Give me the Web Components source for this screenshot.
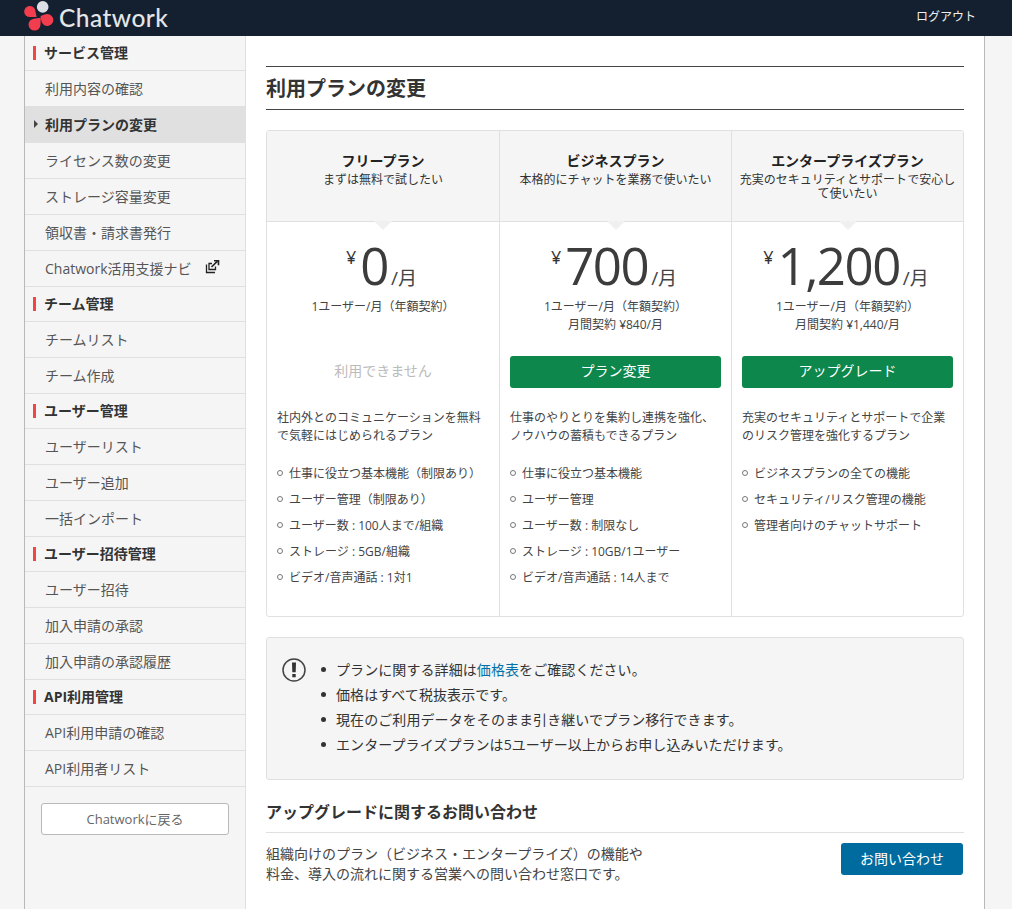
<!DOCTYPE html>
<html lang="ja"><head><meta charset="utf-8"><title>Chatwork</title>
<style>
html,body{margin:0;padding:0;height:909px;overflow:hidden;background:#f5f5f5;color:#333;font:14px/20px "Open Sans","Noto Sans CJK JP",sans-serif}
</style></head><body>
<cw-app>
  <cw-header slot="header"></cw-header>
  <cw-sidebar slot="side">
    <cw-group>サービス管理</cw-group>
    <cw-item>利用内容の確認</cw-item>
    <cw-item active>利用プランの変更</cw-item>
    <cw-item>ライセンス数の変更</cw-item>
    <cw-item>ストレージ容量変更</cw-item>
    <cw-item>領収書・請求書発行</cw-item>
    <cw-item external>Chatwork活用支援ナビ</cw-item>
    <cw-group>チーム管理</cw-group>
    <cw-item>チームリスト</cw-item>
    <cw-item>チーム作成</cw-item>
    <cw-group>ユーザー管理</cw-group>
    <cw-item>ユーザーリスト</cw-item>
    <cw-item>ユーザー追加</cw-item>
    <cw-item>一括インポート</cw-item>
    <cw-group>ユーザー招待管理</cw-group>
    <cw-item>ユーザー招待</cw-item>
    <cw-item>加入申請の承認</cw-item>
    <cw-item>加入申請の承認履歴</cw-item>
    <cw-group>API利用管理</cw-group>
    <cw-item>API利用申請の確認</cw-item>
    <cw-item>API利用者リスト</cw-item>
  </cw-sidebar>
  <cw-main slot="main">
    <cw-title>利用プランの変更</cw-title>
    <cw-plans>
      <cw-plan name="フリープラン" tagline="まずは無料で試したい" price="0" terms="1ユーザー/月（年額契約）" action="利用できません" disabled desc="社内外とのコミュニケーションを無料で気軽にはじめられるプラン" features="仕事に役立つ基本機能（制限あり）|ユーザー管理（制限あり）|ユーザー数 : 100人まで/組織|ストレージ : 5GB/組織|ビデオ/音声通話 : 1対1"></cw-plan>
      <cw-plan name="ビジネスプラン" tagline="本格的にチャットを業務で使いたい" price="700" terms="1ユーザー/月（年額契約）" monthly="月間契約 ¥840/月" action="プラン変更" desc="仕事のやりとりを集約し連携を強化、ノウハウの蓄積もできるプラン" features="仕事に役立つ基本機能|ユーザー管理|ユーザー数 : 制限なし|ストレージ : 10GB/1ユーザー|ビデオ/音声通話 : 14人まで"></cw-plan>
      <cw-plan name="エンタープライズプラン" tagline="充実のセキュリティとサポートで安心して使いたい" price="1,200" terms="1ユーザー/月（年額契約）" monthly="月間契約 ¥1,440/月" action="アップグレード" desc="充実のセキュリティとサポートで企業のリスク管理を強化するプラン" features="ビジネスプランの全ての機能|セキュリティ/リスク管理の機能|管理者向けのチャットサポート"></cw-plan>
    </cw-plans>
    <cw-notice>
      <li>プランに関する詳細は<a href="#">価格表</a>をご確認ください。</li>
      <li>価格はすべて税抜表示です。</li>
      <li>現在のご利用データをそのまま引き継いでプラン移行できます。</li>
      <li>エンタープライズプランは5ユーザー以上からお申し込みいただけます。</li>
    </cw-notice>
    <cw-contact></cw-contact>
  </cw-main>
</cw-app>
<script>
function def(name, html, setup){
  customElements.define(name, class extends HTMLElement{
    connectedCallback(){
      if(this.shadowRoot) return;
      const r=this.attachShadow({mode:'open'});
      r.innerHTML = typeof html==='function' ? html(this) : html;
      if(setup) setup(this,r);
    }
  });
}
function drop(cx,cy,rad,tx,ty){
  const dx=tx-cx,dy=ty-cy,d=Math.hypot(dx,dy),a=Math.atan2(dy,dx),b=Math.acos(rad/d);
  const p=s=>[(cx+rad*Math.cos(a+s*b)).toFixed(2),(cy+rad*Math.sin(a+s*b)).toFixed(2)].join(' ');
  return `M${tx} ${ty}L${p(1)}A${rad} ${rad} 0 1 1 ${p(-1)}Z`;
}
def('cw-app',`<style>
:host{display:block;height:909px;overflow:hidden}
.body{display:grid;grid-template-columns:221px 738px;margin-left:24px;width:961px;border-left:1px solid #b9b9b9;border-right:1px solid #b9b9b9;box-sizing:border-box;height:873px}
</style><slot name="header"></slot><div class="body"><slot name="side"></slot><slot name="main"></slot></div>`);
def('cw-header',`<style>
:host{display:flex;align-items:center;justify-content:space-between;height:36px;background:#14202f;color:#fff;box-sizing:border-box;padding:0 36px 0 24px}
.logo{display:flex;align-items:center;gap:5px}
.word{font:500 24.5px/36px Lato,sans-serif;color:#e4e6e9;letter-spacing:.45px}
.out{font-size:12px;color:#eef0f2;margin-top:-3px}
svg{margin-top:-2px}
</style>
<div class="logo"><svg width="30" height="32" viewBox="0 0 30 32">
<circle cx="18.700" cy="5.900" r="5.800" fill="#dcdfe3"/>
<path d="${drop(5.8,10.5,5.6,12.6,16)}" fill="#f23d4f"/>
<path d="${drop(23.3,19,6,16.5,15)}" fill="#f23d4f"/>
<path d="${drop(10.5,23.6,6,16.8,16.8)}" fill="#f23d4f"/>
</svg><span class="word">Chatwork</span></div>
<span class="out">ログアウト</span>`);
def('cw-sidebar',`<style>
:host{display:block;background:#f5f5f5;border-right:1px solid #e0e0e0;box-sizing:border-box;height:873px}
.back{display:block;margin:16px 16px 0 16px;height:32px;box-sizing:border-box;border:1px solid #b9b9b9;border-radius:3px;background:#fff;color:#666;font-size:13px;line-height:30px;text-align:center}
</style><slot></slot><div class="back">Chatworkに戻る</div>`);
def('cw-group',`<style>
:host{display:flex;align-items:center;height:35px;box-sizing:border-box;border-bottom:1px solid #e0e0e0;padding:0 0 0 8px;font-weight:700;font-size:14px;color:#333}
i{display:block;width:3px;height:14px;background:#f44545;margin-right:8px}
</style><i></i><slot></slot>`);
def('cw-item',`<style>
:host{display:flex;align-items:center;height:36px;box-sizing:border-box;border-bottom:1px solid #e0e0e0;padding:0 0 0 20px;font-size:14px;color:#555;position:relative}
:host([active]){background:#e0e0e0;color:#333;font-weight:700;border-bottom-color:#e0e0e0}
.arrow{position:absolute;left:9px;top:13px;width:0;height:0;border-left:4px solid #444;border-top:4px solid transparent;border-bottom:4px solid transparent}
svg{position:absolute;left:180px;top:8px}
</style><slot></slot>`,(el,r)=>{
  if(el.hasAttribute('active')) r.innerHTML+='<span class="arrow"></span>';
  if(el.hasAttribute('external')) r.innerHTML+='<svg width="15" height="15" viewBox="0 0 15 15" fill="none" stroke="#222" stroke-width="1.300"><path d="M1.500 5.500V13.500H10"/><path d="M7 4.500H4V10.500H10.500V7.500"/><path d="M6.500 8 12.500 2.200" stroke-width="1.600"/><path d="M9 1.700H13.500V6.200" stroke-width="1.600"/></svg>';
});
def('cw-main',`<style>
:host{display:block;background:#fff;padding:30px 20px 0;box-sizing:border-box;height:873px;overflow:hidden}
</style><slot></slot>`);
def('cw-title',`<style>
:host{display:block;height:44px;box-sizing:border-box;border-top:1px solid #444;border-bottom:1px solid #444;font-weight:700;font-size:20px;line-height:44px;color:#333}
</style><slot></slot>`);
def('cw-plans',`<style>
:host{display:grid;grid-template-columns:233px 232px 231px;margin-top:20px;height:487px;box-sizing:border-box;border:1px solid #e0e0e0;border-radius:3px;overflow:hidden}
</style><slot></slot>`);
def('cw-plan',el=>{
  const a=n=>el.getAttribute(n)||'';
  const lis=a('features').split('|').map(f=>`<li>${f}</li>`).join('');
  return `<style>
:host{display:block;border-right:1px solid #e0e0e0;font-size:12px;color:#333;min-width:0}
:host(:last-child){border-right:0}
.head{position:relative;height:91px;box-sizing:border-box;background:#f5f5f5;border-bottom:1px solid #e0e0e0;padding:20px 6px 0;text-align:center;line-height:14px}
.head b{display:block;font-size:14px;line-height:19px;color:#222}
.head span{display:block;color:#333;margin-top:3px}
.head::after{content:"";position:absolute;left:50%;bottom:-9px;margin-left:-9px;width:0;height:0;border-left:9px solid transparent;border-right:9px solid transparent;border-top:9px solid #f0f0f0}
.price{display:flex;justify-content:center;align-items:baseline;height:56px;margin-top:15px;padding-right:3px;color:#333;line-height:56px}
.yen{font-size:18px;align-self:flex-start;line-height:18px;margin:11px 4px 0 0}
.num{font-size:51px;letter-spacing:-1.500px;font-weight:400;color:#3c3c3c}
.per{font-size:19px;margin-left:3px;color:#444}
.terms{text-align:center;line-height:18px;height:36px;margin-top:4px;color:#444;padding-top:1px}
.act{margin:22px 10px 0 10px;height:32px;box-sizing:border-box;background:#0d874c;color:#fff;border-radius:3px;text-align:center;font-size:14px;line-height:30px}
.dis{background:none;color:#bbb}
.desc{margin:21px 10px 0;font-size:12px;line-height:18px;color:#444}
ul{list-style:none;margin:16px 10px 0;padding:0;font-size:12px}
li{position:relative;height:26px;line-height:26px;padding-left:12px;color:#444}
li::before{content:"";position:absolute;left:0;top:9px;width:4px;height:4px;border:1px solid #777;border-radius:50%}
</style>
<div class="head"><b>${a('name')}</b><span>${a('tagline')}</span></div>
<div class="price"><span class="yen">¥</span><span class="num">${a('price')}</span><span class="per">/月</span></div>
<div class="terms">${a('terms')}<br>${a('monthly')}</div>
<div class="act ${el.hasAttribute('disabled')?'dis':''}">${a('action')}</div>
<div class="desc">${a('desc')}</div>
<ul>${lis}</ul>`;
});
def('cw-notice',`<style>
:host{display:flex;margin-top:20px;height:143px;box-sizing:border-box;border:1px solid #e0e0e0;border-radius:3px;background:#f5f5f5;padding:19px 15px;color:#333;font-size:14px}
svg{flex:none;margin:1px 12px 0 0}
::slotted(li){display:block;position:relative;line-height:25px;letter-spacing:.08px}
::slotted(li)::before{content:"";position:absolute;left:-15px;top:10px;width:5px;height:5px;border-radius:50%;background:#333}
ul{margin:0;padding:0 0 0 18px}
</style><svg width="24" height="24" viewBox="0 0 24 24"><circle cx="12" cy="12" r="11" fill="none" stroke="#444" stroke-width="1.500"/><path d="M10 4.500h4l-.3 9.800h-3.400ZM10.300 16h3.400v3.200h-3.400Z" fill="#333"/></svg>
<ul><slot></slot></ul>`);
document.querySelectorAll('cw-notice a').forEach(a=>{a.style.cssText='color:#0071a8;text-decoration:none'});
def('cw-contact',`<style>
:host{display:block;margin-top:20px;color:#333}
h2{margin:0;height:33px;box-sizing:border-box;border-bottom:1px solid #e0e0e0;font-size:16px;line-height:25px;font-weight:700}
.row{display:flex;justify-content:space-between;align-items:flex-start;padding-top:10px}
p{margin:0;font-size:14px;line-height:20px;width:400px;padding-top:1px;color:#444}
.btn{width:122px;height:32px;margin-right:1px;background:#006b9e;color:#fff;border-radius:3px;text-align:center;font-size:14px;line-height:31px}
</style><h2>アップグレードに関するお問い合わせ</h2>
<div class="row"><p>組織向けのプラン（ビジネス・エンタープライズ）の機能や<br>料金、導入の流れに関する営業への問い合わせ窓口です。</p><div class="btn">お問い合わせ</div></div>`);
</script>
</body></html>
